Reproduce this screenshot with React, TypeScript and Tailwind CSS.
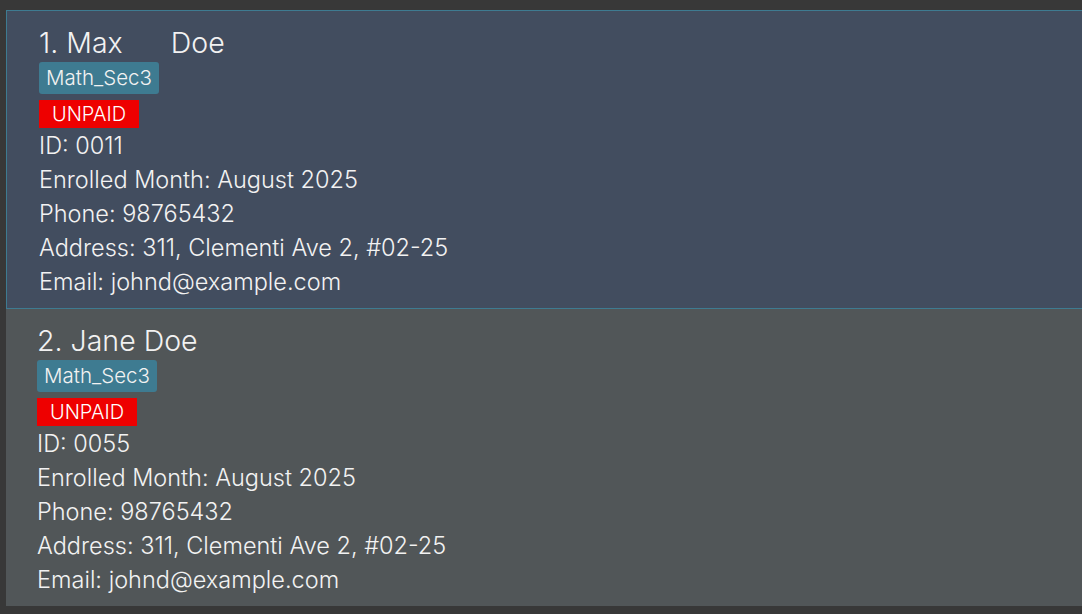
import React from 'react';

type Student = {
    index: number;
    name: string;
    tag: string;
    id: string;
    month: string;
    phone: string;
    address: string;
    email: string;
};

const STUDENTS: Student[] = [
    { index: 1, name: 'Max      Doe', tag: 'Math_Sec3', id: '0011', month: 'August 2025', phone: '98765432', address: '311, Clementi Ave 2, #02-25', email: 'johnd@example.com' },
    { index: 2, name: 'Jane Doe', tag: 'Math_Sec3', id: '0055', month: 'August 2025', phone: '98765432', address: '311, Clementi Ave 2, #02-25', email: 'johnd@example.com' },
];

const StudentCard: React.FC<{ s: Student; selected: boolean }> = ({ s, selected }) => (
    <div
        className={
            selected
                ? 'w-[1100px] h-[299px] border border-[#3e7b91] bg-[#424d5f] pl-[32px] pt-[15px]'
                : 'w-[1100px] h-[297px] bg-[#515658] pl-[31px] pt-[15px]'
        }
    >
        <div className="text-[28.5px] leading-[34px] font-light text-[#f2f2f2] whitespace-pre">
            {s.index}. {s.name}
        </div>
        <div className="mt-[2px] flex">
            <span className="h-[32px] w-[120px] justify-center flex items-center rounded-[3px] bg-[#3e7b91] text-[20.5px] font-light text-[#f2f2f2]">
                {s.tag}
            </span>
        </div>
        <div className="mt-[6px] flex">
            <span className="h-[28px] w-[100px] justify-center flex items-center bg-[#ee0000] text-[20px] font-light text-white">
                UNPAID
            </span>
        </div>
        <div className="pt-px text-[23.5px] leading-[34px] font-light text-[#f2f2f2]">
            <div>ID: {s.id}</div>
            <div>Enrolled Month: {s.month}</div>
            <div>Phone: {s.phone}</div>
            <div>Address: {s.address}</div>
            <div>Email: {s.email}</div>
        </div>
    </div>
);

export default function App() {
    return (
        <div
            className="w-[1082px] h-[614px] overflow-hidden bg-[#383838] pt-[10px] pl-[6px]"
            style={{ fontFamily: 'Inter, "Noto Sans", sans-serif' }}
        >
            {STUDENTS.map((s, i) => (
                <StudentCard key={s.index} s={s} selected={i === 0} />
            ))}
        </div>
    );
}
